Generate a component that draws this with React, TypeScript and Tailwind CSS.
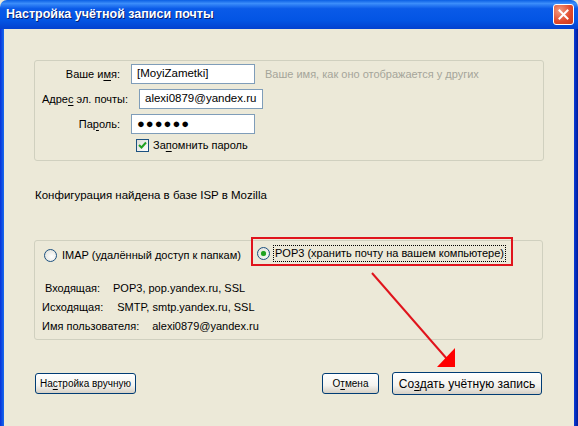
import React from 'react';

const font = "font-['Liberation_Sans','DejaVu_Sans',sans-serif]";

const Radio: React.FC<{ checked?: boolean }> = ({ checked }) => (
  <span className="relative inline-flex h-[13px] w-[13px] shrink-0 items-center justify-center rounded-full border border-[#1c5180] bg-[radial-gradient(circle_at_60%_60%,#ffffff_0%,#e6e6e0_70%,#d4d4cc_100%)]">
    {checked && <span className="h-[5px] w-[5px] rounded-full bg-[#21a121] shadow-[0_0_1px_#4dd14d]" />}
  </span>
);

const Checkbox: React.FC = () => (
  <span className="inline-flex h-[13px] w-[13px] shrink-0 items-center justify-center border border-[#1c5180] bg-[linear-gradient(135deg,#dcdcd7,#ffffff)]">
    <svg width="9" height="9" viewBox="0 0 9 9">
      <path d="M1 4 L3.5 6.5 L8 1.5" fill="none" stroke="#21a121" strokeWidth="2" />
    </svg>
  </span>
);

const Button: React.FC<{ className?: string; children: React.ReactNode }> = ({ className = '', children }) => (
  <button
    className={`flex items-center justify-center rounded-[3px] border border-[#003c74] bg-[linear-gradient(#ffffff,#f4f3ee_60%,#d6d0c5)] text-black ${className}`}
  >
    {children}
  </button>
);

const U: React.FC<{ children: React.ReactNode }> = ({ children }) => <span className="underline underline-offset-2">{children}</span>;

const TextInput: React.FC<{ value: string; className?: string }> = ({ value, className = '' }) => (
  <div className={`flex h-[20px] w-[124px] items-center overflow-hidden border border-[#7f9db9] bg-white px-[5px] text-[11.5px] text-black ${className}`}>
    {value}
  </div>
);

export default function App() {
  return (
    <div className={`relative h-[426px] w-[578px] overflow-hidden bg-[#ece9d8] ${font} text-[11px] text-black`}>
      {/* title bar */}
      <div className="flex h-[29px] items-center justify-between rounded-t-[7px] bg-[linear-gradient(#0a5fe4_0%,#3b8dfa_12%,#0a5ae8_30%,#0355e4_70%,#0341cf_100%)] pl-[6px] pr-[4px]">
        <span className="text-[12.5px] font-bold text-white [text-shadow:1px_1px_0_#0a1e6e]">Настройка учётной записи почты</span>
        <span className="flex h-[21px] w-[21px] items-center justify-center rounded-[3px] border border-white bg-[radial-gradient(circle_at_30%_30%,#f29b80,#e0482a_60%,#c93a1b)]">
          <svg width="11" height="11" viewBox="0 0 11 11">
            <path d="M1.5 1.5 L9.5 9.5 M9.5 1.5 L1.5 9.5" stroke="white" strokeWidth="2" strokeLinecap="square" />
          </svg>
        </span>
      </div>

      {/* body with side frame */}
      <div className="flex h-[397px]">
        <div className="w-[4px] bg-[linear-gradient(90deg,#0831d9,#166aee)]" />
        <div className="flex flex-1 flex-col pl-[30px] pt-[31px]">
          {/* account group */}
          <div className="flex h-[101px] w-[510px] flex-col gap-[5px] rounded-[3px] border border-[#d0d0bf] pt-[3px]">
            <div className="flex items-center">
              <span className="w-[85px] text-right">Ваше и<U>м</U>я:</span>
              <TextInput className="ml-[11px]" value="[MoyiZametki]" />
              <span className="ml-[10px] text-[#a5a59a]">Ваше имя, как оно отображается у других</span>
            </div>
            <div className="flex items-center">
              <span className="w-[93px] text-right">Адре<U>с</U> эл. почты:</span>
              <TextInput className="ml-[11px]" value="alexi0879@yandex.ru" />
            </div>
            <div className="flex items-center">
              <span className="w-[85px] text-right">Па<U>р</U>оль:</span>
              <TextInput className="ml-[11px] text-[13px] tracking-[1px]" value="●●●●●●" />
            </div>
            <div className="flex h-[13px] items-center pl-[101px]">
              <Checkbox />
              <span className="ml-[4px]">За<U>п</U>омнить пароль</span>
            </div>
          </div>

          <div className="ml-[1px] mt-[27px] text-[11.5px] leading-[14px]">Конфигурация найдена в базе ISP в Mozilla</div>

          {/* config group */}
          <div className="mt-[38px] flex h-[100px] w-[509px] flex-col rounded-[3px] border border-[#d0d0bf] pl-[9px] pt-[2px]">
            <div className="flex h-[24px] items-center">
              <div className="flex w-[213px] items-center">
                <Radio />
                <span className="ml-[5px]">IMAP (удалённый доступ к папкам)</span>
              </div>
              <div className="-mt-[4px] flex items-center">
                <Radio checked />
                <span className="ml-[3px] border border-dotted border-black px-[1px] leading-[15px]">POP3 (хранить почту на вашем компьютере)</span>
              </div>
            </div>
            <div className="mt-[12px] flex flex-col text-[11px] leading-[19px]">
              <div className="pl-[1px]">
                Входящая:<span className="ml-[13px]">POP3, pop.yandex.ru, SSL</span>
              </div>
              <div className="-ml-[2px]">
                Исходящая:<span className="ml-[14px]">SMTP, smtp.yandex.ru, SSL</span>
              </div>
              <div className="-ml-[2px]">
                Имя пользователя:<span className="ml-[13px]">alexi0879@yandex.ru</span>
              </div>
            </div>
          </div>

          {/* buttons */}
          <div className="mt-[32px] flex w-[508px] items-center pl-[1px]">
            <Button className="h-[21px] w-[101px] text-[10px]">
              На<U>с</U>тройка вручную
            </Button>
            <div className="flex-1" />
            <Button className="h-[21px] w-[57px] text-[10px]">
              О<U>т</U>мена
            </Button>
            <Button className="ml-[13px] h-[23px] w-[150px] text-[12px]">
              Со<U>з</U>дать учётную запись
            </Button>
          </div>
        </div>
        <div className="w-[4px] bg-[linear-gradient(90deg,#0a3bd8,#001b9a)]" />
      </div>

      {/* annotation */}
      <div className="pointer-events-none absolute left-[251px] top-[237px] h-[29px] w-[262px] border-2 border-[#e0141c]" />
      <svg className="pointer-events-none absolute inset-0" width="578" height="426">
        <line x1="372" y1="273" x2="447" y2="359" stroke="#e0141c" strokeWidth="2" />
        <polygon points="455,348 455,367 437,367" fill="#ff0000" />
      </svg>
    </div>
  );
}
